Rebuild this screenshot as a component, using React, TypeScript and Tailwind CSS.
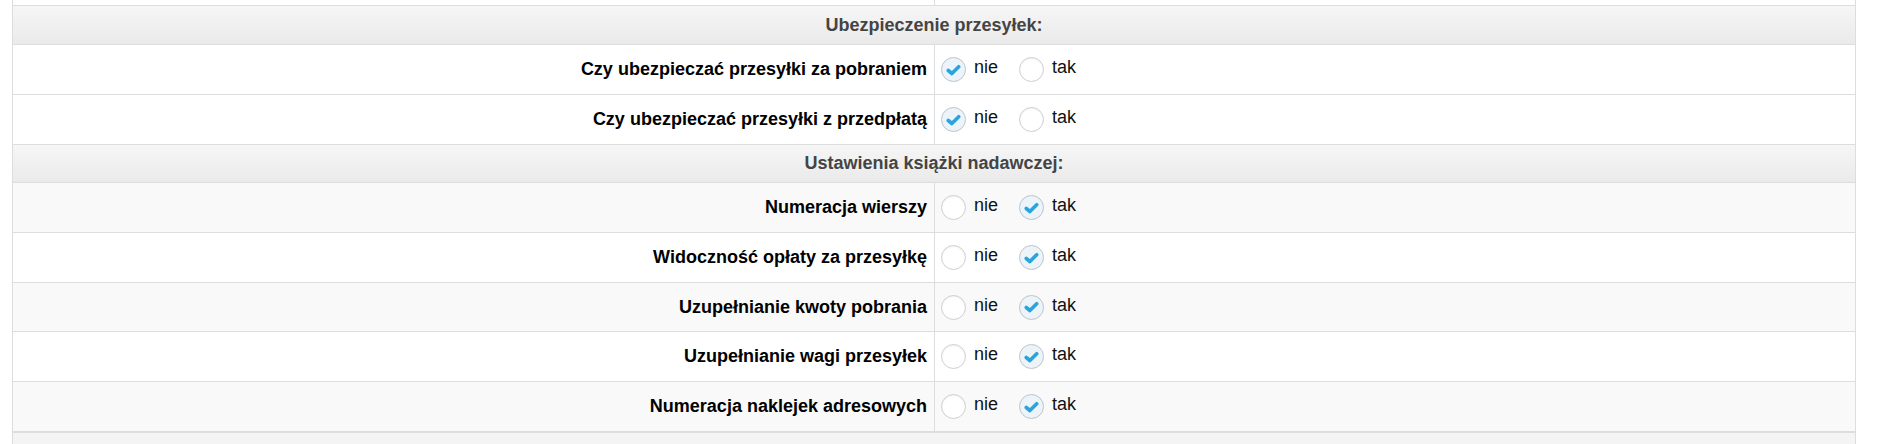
import React from "react";

type Row = { label: string; value: "nie" | "tak"; h: string; bg: string };

const font = { fontFamily: '"Liberation Sans", Arial, Helvetica, sans-serif' };

function Radio({ checked }: { checked: boolean }) {
  return (
    <span
      className={
        "flex h-[25px] w-[25px] shrink-0 items-center justify-center rounded-full border " +
        (checked
          ? "border-[#bcc4cb] bg-[#edf4f9]"
          : "border-[#cfcfcf] bg-white shadow-[inset_0_1px_2px_rgba(0,0,0,0.06)]")
      }
    >
      {checked && (
        <svg width="15" height="12" viewBox="0 0 15 12">
          <path
            d="M2.3 6.5 L5.9 9.5 L12.7 2.7"
            fill="none"
            stroke="#2aa5db"
            strokeWidth="3.6"
            strokeLinecap="round"
            strokeLinejoin="round"
          />
        </svg>
      )}
    </span>
  );
}

function Header({ text, h }: { text: string; h: string }) {
  return (
    <div
      className={
        "flex items-center justify-center border-t border-[#dddddd] bg-linear-to-b from-[#f6f6f6] to-[#eaeaea] text-[18px] font-bold text-[#444444] " +
        h
      }
    >
      {text}
    </div>
  );
}

function OptionRow({ row }: { row: Row }) {
  return (
    <div className={"flex border-t border-[#dddddd] " + row.h + " " + row.bg}>
      <div className="flex w-[922px] shrink-0 items-center justify-end border-r border-[#dddddd] pr-[7px] text-[18px] font-bold text-[#000000]">
        {row.label}
      </div>
      <div className="flex items-center pl-[6px] text-[18px] text-[#111111]">
        <Radio checked={row.value === "nie"} />
        <span className="mb-[4px] ml-[8px] mr-[21px]">nie</span>
        <Radio checked={row.value === "tak"} />
        <span className="mb-[4px] ml-[8px]">tak</span>
      </div>
    </div>
  );
}

export default function App() {
  const sec1: Row[] = [
    { label: "Czy ubezpieczać przesyłki za pobraniem", value: "nie", h: "h-[50px]", bg: "bg-white" },
    { label: "Czy ubezpieczać przesyłki z przedpłatą", value: "nie", h: "h-[50px]", bg: "bg-white" },
  ];
  const sec2: Row[] = [
    { label: "Numeracja wierszy", value: "tak", h: "h-[50px]", bg: "bg-[#f9f9f9]" },
    { label: "Widoczność opłaty za przesyłkę", value: "tak", h: "h-[50px]", bg: "bg-white" },
    { label: "Uzupełnianie kwoty pobrania", value: "tak", h: "h-[49px]", bg: "bg-[#f9f9f9]" },
    { label: "Uzupełnianie wagi przesyłek", value: "tak", h: "h-[50px]", bg: "bg-white" },
    { label: "Numeracja naklejek adresowych", value: "tak", h: "h-[50px]", bg: "bg-[#f9f9f9]" },
  ];
  return (
    <div className="h-[444px] w-[1886px] overflow-hidden bg-white" style={font}>
      <div className="ml-[12px] w-[1844px] border-x border-[#dddddd]">
        <div className="flex h-[5px]">
          <div className="w-[922px] border-r border-[#dddddd]" />
        </div>
        <Header text="Ubezpieczenie przesyłek:" h="h-[39px]" />
        {sec1.map((r) => (
          <OptionRow key={r.label} row={r} />
        ))}
        <Header text="Ustawienia książki nadawczej:" h="h-[38px]" />
        {sec2.map((r) => (
          <OptionRow key={r.label} row={r} />
        ))}
        <div className="h-[20px] border-t-2 border-[#dddddd] bg-[#f4f4f4]" />
      </div>
    </div>
  );
}
